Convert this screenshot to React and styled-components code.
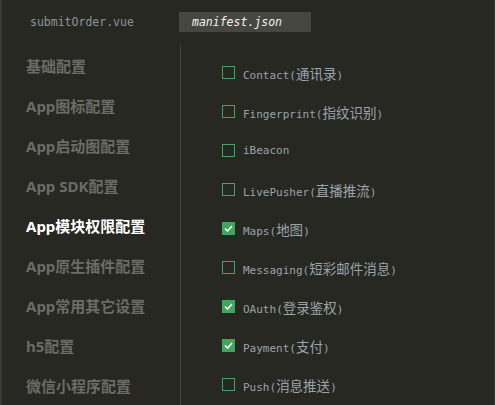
import React from 'react';
import styled, { createGlobalStyle } from 'styled-components';

const GlobalStyle = createGlobalStyle`
    html, body {
        margin: 0;
        padding: 0;
        background: #272822;
    }
`;

const Editor = styled.div`
    width: 495px;
    height: 405px;
    box-sizing: border-box;
    background: #272822;
    border-left: 2px solid #3a3b35;
    border-right: 1px solid #3a3b35;
    overflow: hidden;
    display: flex;
    flex-direction: column;
`;

const TabBar = styled.div`
    height: 48px;
    display: flex;
    align-items: flex-start;
    padding-top: 12px;
    box-sizing: border-box;
`;

const Tab = styled.div`
    height: 20px;
    display: flex;
    align-items: center;
    font-family: "DejaVu Sans Mono", "Liberation Mono", monospace;
    font-size: 11.5px;
    box-sizing: border-box;
    color: ${p => (p.active ? '#f4f4f0' : '#8d949c')};
    font-style: ${p => (p.active ? 'italic' : 'normal')};
    background: ${p => (p.active ? '#464741' : 'transparent')};
    width: ${p => p.width}px;
    padding-left: ${p => p.pad}px;
`;

const Body = styled.div`
    flex: 1;
    display: flex;
`;

const Sidebar = styled.nav`
    width: 179px;
    margin-top: -1px;
    flex-shrink: 0;
    border-right: 1px solid #46473f;
    padding-left: 24px;
    box-sizing: border-box;
`;

const MenuItem = styled.div`
    height: 40px;
    display: flex;
    align-items: center;
    font-family: "Noto Sans", "Noto Sans CJK SC", sans-serif;
    font-size: 15px;
    font-weight: 700;
    color: ${p => (p.active ? '#ffffff' : '#6c6c67')};
    white-space: nowrap;
`;

const Options = styled.div`
    padding: 7px 0 0 41px;
`;

const Row = styled.label`
    height: 39px;
    display: flex;
    align-items: center;
    gap: 8px;
    font-family: "DejaVu Sans Mono", "Liberation Mono", monospace;
    font-size: 11px;
    color: #9ba3ab;
    white-space: nowrap;
`;

const Cjk = styled.span`
    font-family: "Noto Sans CJK SC", sans-serif;
    font-size: 13.5px;
`;

const Box = styled.span`
    width: 13px;
    height: 13px;
    box-sizing: border-box;
    border: 1px solid #3fa75d;
    background: ${p => (p.checked ? '#3fa75d' : 'transparent')};
    display: flex;
    align-items: center;
    justify-content: center;
    flex-shrink: 0;
`;

const menu = [
    '基础配置',
    'App图标配置',
    'App启动图配置',
    'App SDK配置',
    'App模块权限配置',
    'App原生插件配置',
    'App常用其它设置',
    'h5配置',
    '微信小程序配置',
];

const modules = [
    { name: 'Contact', cn: '通讯录' },
    { name: 'Fingerprint', cn: '指纹识别' },
    { name: 'iBeacon' },
    { name: 'LivePusher', cn: '直播推流' },
    { name: 'Maps', cn: '地图', on: true },
    { name: 'Messaging', cn: '短彩邮件消息' },
    { name: 'OAuth', cn: '登录鉴权', on: true },
    { name: 'Payment', cn: '支付', on: true },
    { name: 'Push', cn: '消息推送' },
];

const Check = () => (
    <svg width="9" height="7" viewBox="0 0 9 7">
        <path d="M1 3.5 L3.5 6 L8 1" fill="none" stroke="#fff" strokeWidth="1.6" />
    </svg>
);

const App = () => {
    return (
        <Editor>
            <GlobalStyle />
            <TabBar>
                <Tab width={177} pad={28}>submitOrder.vue</Tab>
                <Tab active width={132} pad={13}>manifest.json</Tab>
            </TabBar>
            <Body>
                <Sidebar>
                    {menu.map((m, i) => (
                        <MenuItem key={m} active={i === 4}>{m}</MenuItem>
                    ))}
                </Sidebar>
                <Options>
                    {modules.map(m => (
                        <Row key={m.name}>
                            <Box checked={m.on}>{m.on && <Check />}</Box>
                            <span>
                                {m.name}
                                {m.cn && <>(<Cjk>{m.cn}</Cjk>)</>}
                            </span>
                        </Row>
                    ))}
                </Options>
            </Body>
        </Editor>
    );
};

export default App;
